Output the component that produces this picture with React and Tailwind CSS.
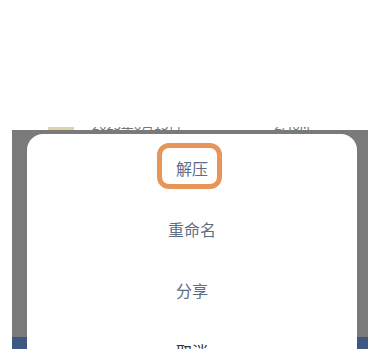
import React from "react"

const items = ["解压", "重命名", "分享"]

export default function App() {
  return (
    <div
      className="relative w-[368px] h-[349px] overflow-hidden bg-white"
      style={{ fontFamily: '"Noto Sans CJK SC", "Noto Sans", sans-serif' }}
    >
      {/* list row peeking out above the sheet */}
      <div className="pt-[127px]">
        <div className="h-[3px] overflow-hidden ml-[48px] mr-[58px] flex items-start justify-between text-[13px] leading-[13px] text-[#777]">
          <div className="flex items-start gap-[18px] -mt-[9px]">
            <div className="w-[26px] h-[14px] rounded-[2px] bg-[#ddd3a8]" />
            <span>2023年6月15日</span>
          </div>
          <span className="-mt-[9px]">2.46M</span>
        </div>
      </div>

      {/* dimmed overlay with the action sheet */}
      <div className="absolute left-[12px] top-[130px] right-0 bottom-0 bg-[#7a7a7a]">
        <div className="absolute left-0 right-0 bottom-0 h-[12px] bg-[#3f5783]" />
        <div className="relative ml-[15px] mr-[11px] mt-[4px] pt-[3px] rounded-t-[16px] bg-white flex flex-col">
          {items.map((label, i) => (
            <div key={label} className="h-[61px] flex items-center justify-center">
              <span className="relative h-4 leading-4 text-[16px] text-[#5d6d88]">
                {i === 0 && (
                  <span className="absolute -left-[19px] -right-[14px] -top-[17px] -bottom-[13px] border-[5px] border-[#e8955a] rounded-[12px]" />
                )}
                {label}
              </span>
            </div>
          ))}
          <div className="h-[61px] flex items-center justify-center">
            <span className="h-4 leading-4 text-[16px] text-[#333]">取消</span>
          </div>
        </div>
      </div>
    </div>
  )
}
